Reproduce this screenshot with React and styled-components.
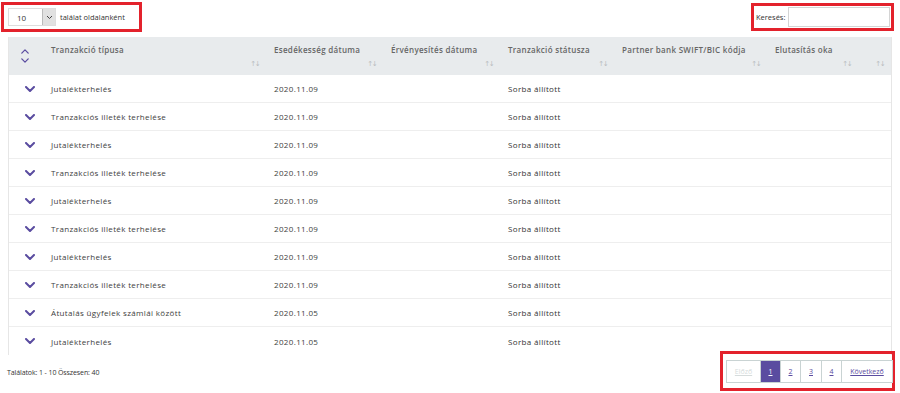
import React from "react";
import styled, { createGlobalStyle } from "styled-components";

const GlobalStyle = createGlobalStyle`
  html, body {
    margin: 0;
    padding: 0;
    background: #fff;
  }
  body {
    font-family: "Open Sans", "Liberation Sans", sans-serif;
    color: #444;
  }
`;

const purple = "#5a4ca0";
const red = "#e3222c";

const Page = styled.div`
  width: 900px;
  height: 393px;
  box-sizing: border-box;
  overflow: hidden;
`;

const TopBar = styled.div`
  display: flex;
  justify-content: space-between;
  align-items: flex-start;
  padding: 2px 6px 0 1px;
  height: 37px;
  box-sizing: border-box;
`;

const Marked = styled.div`
  display: flex;
  align-items: center;
  border: 3px solid ${red};
  box-sizing: border-box;
  height: ${(p) => p.$h}px;
  width: ${(p) => p.$w}px;
  padding: ${(p) => p.$pad};
  margin-top: ${(p) => p.$top || 0}px;
`;

const Select = styled.div`
  display: flex;
  height: 18px;
  width: 48px;
  border: 1px solid #ddd;
  box-sizing: border-box;
  font-size: 8px;
  color: #333;
`;

const SelectValue = styled.div`
  flex: 1;
  display: flex;
  align-items: center;
  padding-left: 8px;
`;

const SelectButton = styled.div`
  width: 12px;
  background: #e1e1e1;
  border-left: 1px solid #bbb;
  display: flex;
  align-items: center;
  justify-content: center;
`;

const SmallLabel = styled.span`
  font-size: 7.5px;
  color: #333;
  margin-left: ${(p) => (p.$flush ? 0 : 4)}px;
  letter-spacing: 0;
`;

const SearchInput = styled.div`
  width: 102px;
  height: 20px;
  border: 1px solid #d4d4d4;
  box-sizing: border-box;
  margin-left: 3px;
`;

const Table = styled.div`
  margin: 0 8px;
  width: 884px;
  border-left: 1px solid #e6e6e6;
  border-right: 1px solid #e6e6e6;
  box-sizing: border-box;
`;

const cols = "34px 223px 117px 117px 114px 153px 91px 1fr";

const HeaderRow = styled.div`
  display: grid;
  grid-template-columns: ${cols};
  height: 38px;
  background: #e8ebed;
`;

const HeadCell = styled.div`
  position: relative;
  padding: 7px 0 0 8px;
  font-size: 8px;
  font-weight: 600;
  color: #666;
  letter-spacing: 0.3px;
  white-space: nowrap;
`;

const SortMark = styled.span`
  position: absolute;
  right: 7px;
  bottom: 7px;
  font-size: 7px;
  font-weight: 400;
  color: #b8bcc0;
  letter-spacing: -1.5px;
  font-family: "DejaVu Sans", sans-serif;
`;

const ToggleCell = styled.div`
  display: flex;
  flex-direction: ${(p) => (p.$head ? "column" : "row")};
  align-items: ${(p) => (p.$head ? "center" : "flex-start")};
  justify-content: center;
  gap: 4px;
  padding-left: ${(p) => (p.$head ? 0 : 8)}px;
  padding-right: ${(p) => (p.$head ? 3 : 0)}px;
`;

const Row = styled.div`
  display: grid;
  grid-template-columns: ${cols};
  height: 28px;
  align-items: center;
  border-bottom: 1px solid #eeeeee;
  box-sizing: border-box;
  &:last-child {
    border-bottom: none;
  }
`;

const Cell = styled.div`
  padding-left: 8px;
  font-size: 8px;
  font-weight: 400;
  color: ${(p) => (p.$strong ? "#333" : "#3d3d3d")};
  letter-spacing: 0.35px;
  white-space: nowrap;
`;

const Footer = styled.div`
  display: flex;
  justify-content: space-between;
  align-items: flex-start;
  padding: 0 5px 0 7px;
`;

const Info = styled.div`
  font-size: 7px;
  color: #333;
  margin-top: 13px;
  letter-spacing: -0.1px;
`;

const Pager = styled.div`
  display: flex;
  border: 1px solid #c9d3d3;
  height: 23px;
  box-sizing: border-box;
`;

const PageBtn = styled.span`
  display: flex;
  align-items: center;
  justify-content: center;
  width: ${(p) => p.$w}px;
  border-left: ${(p) => (p.$first ? "none" : "1px solid #c9d3d3")};
  background: ${(p) => (p.$active ? purple : "#fff")};
  color: ${(p) => (p.$active ? "#fff" : p.$disabled ? "#d6dcdc" : purple)};
  font-size: 7px;
  text-decoration: underline;
  box-sizing: border-box;
`;

const Chevron = ({ up, w = 10, h = 6, sw = 2 }) => (
  <svg width={w} height={h} viewBox="0 0 10 6">
    <path
      d={up ? "M1 5 L5 1 L9 5" : "M1 1 L5 5 L9 1"}
      fill="none"
      stroke={purple}
      strokeWidth={sw}
      strokeLinecap="round"
      strokeLinejoin="round"
    />
  </svg>
);

const SelectArrow = () => (
  <svg width="7" height="5" viewBox="0 0 7 5">
    <path d="M1 1 L3.5 3.5 L6 1" fill="none" stroke="#444" strokeWidth="1" />
  </svg>
);

const headers = [
  "Tranzakció típusa",
  "Esedékesség dátuma",
  "Érvényesítés dátuma",
  "Tranzakció státusza",
  "Partner bank SWIFT/BIC kódja",
  "Elutasítás oka",
  "",
];

const rows = [
  ["Jutalékterhelés", "2020.11.09"],
  ["Tranzakciós illeték terhelése", "2020.11.09"],
  ["Jutalékterhelés", "2020.11.09"],
  ["Tranzakciós illeték terhelése", "2020.11.09"],
  ["Jutalékterhelés", "2020.11.09"],
  ["Tranzakciós illeték terhelése", "2020.11.09"],
  ["Jutalékterhelés", "2020.11.09"],
  ["Tranzakciós illeték terhelése", "2020.11.09"],
  ["Átutalás ügyfelek számlái között", "2020.11.05"],
  ["Jutalékterhelés", "2020.11.05"],
];

const pages = [
  { label: "Előző", w: 33, disabled: true },
  { label: "1", w: 20, active: true },
  { label: "2", w: 20 },
  { label: "3", w: 21 },
  { label: "4", w: 20 },
  { label: "Következő", w: 51 },
];

const App = () => {
  return (
    <Page>
      <GlobalStyle />
      <TopBar>
        <Marked $w={141} $h={30} $pad="0 0 0 4px">
          <Select>
            <SelectValue>10</SelectValue>
            <SelectButton>
              <SelectArrow />
            </SelectButton>
          </Select>
          <SmallLabel>találat oldalanként</SmallLabel>
        </Marked>
        <Marked $w={143} $h={28} $top={1} $pad="0 0 0 2px">
          <SmallLabel $flush>Keresés:</SmallLabel>
          <SearchInput />
        </Marked>
      </TopBar>

      <Table>
        <HeaderRow>
          <ToggleCell $head>
            <Chevron up w={8} h={5} sw={1.6} />
            <Chevron w={8} h={5} sw={1.6} />
          </ToggleCell>
          {headers.map((h, i) => (
            <HeadCell key={i}>
              {h}
              <SortMark>↑↓</SortMark>
            </HeadCell>
          ))}
        </HeaderRow>
        {rows.map((r, i) => (
          <Row key={i}>
            <ToggleCell>
              <Chevron />
            </ToggleCell>
            <Cell>{r[0]}</Cell>
            <Cell>{r[1]}</Cell>
            <Cell />
            <Cell $strong>Sorba állított</Cell>
            <Cell />
            <Cell />
            <Cell />
          </Row>
        ))}
      </Table>

      <Footer>
        <Info>Találatok: 1 - 10 Összesen: 40</Info>
        <Marked $w={175} $h={40} $top={-4} $pad="0 0 0 3px">
          <Pager>
            {pages.map((p, i) => (
              <PageBtn
                key={p.label}
                $w={p.w}
                $first={i === 0}
                $active={p.active}
                $disabled={p.disabled}
              >
                {p.label}
              </PageBtn>
            ))}
          </Pager>
        </Marked>
      </Footer>
    </Page>
  );
};

export default App;
